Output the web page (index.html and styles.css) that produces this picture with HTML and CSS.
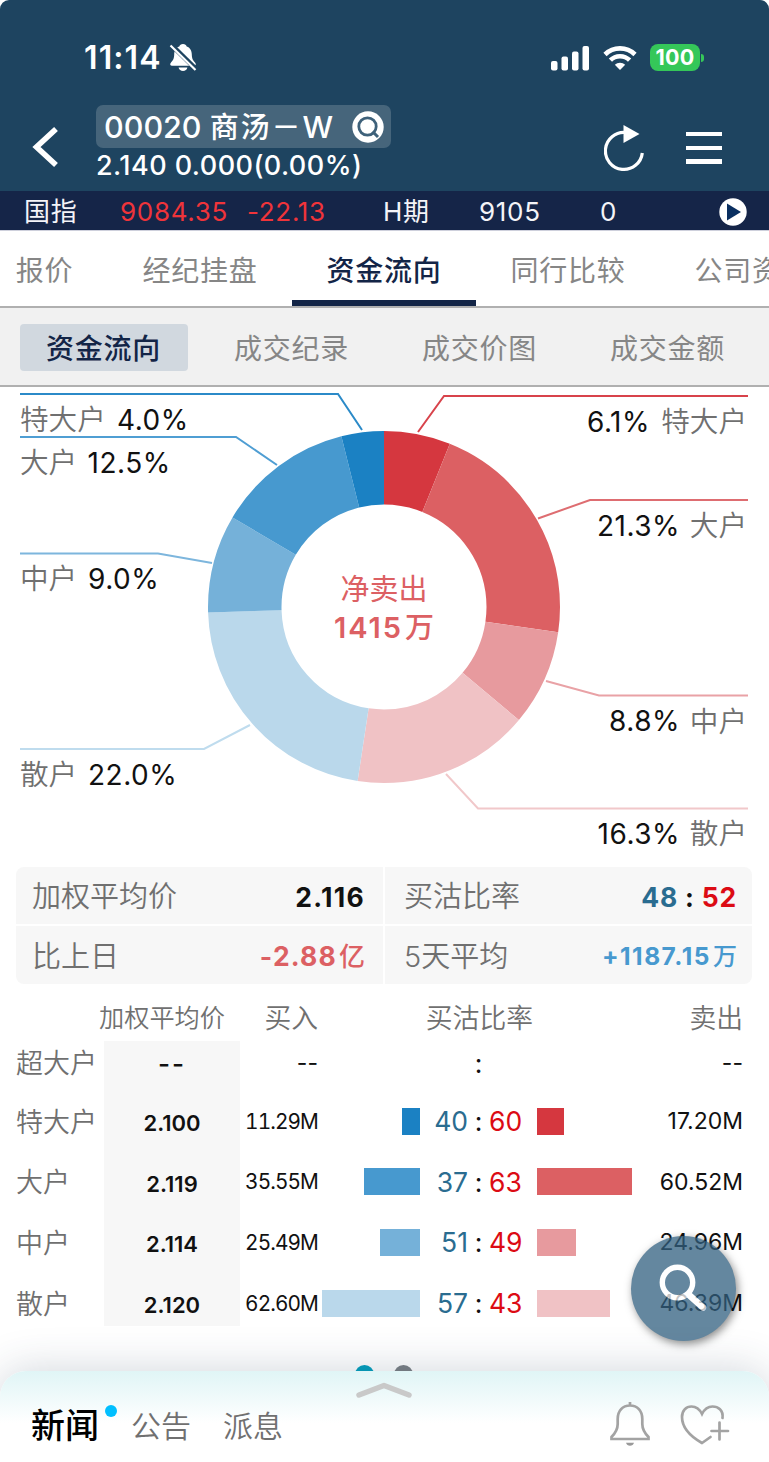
FILE: index.html
```html
<!DOCTYPE html>
<html lang="zh-CN">
<head>
  <meta charset="UTF-8" />
  <meta name="viewport" content="width=device-width, initial-scale=1.0" />
  <title>00020 商汤－W 资金流向</title>
  <link rel="stylesheet" href="styles.css">
</head>
<body>
  <div class="app">
    <header class="header">
      <div class="status-bar">
        <span class="time">11:14</span>
        <svg class="mute-icon" width="28" height="30" viewBox="0 0 28 30">
          <path d="M14 1c-2 0-3.300 1-3.700 2.600C6.500 5 5.300 8 5.200 11.500 5.100 16 3.800 17.500 2 19.500c-1.500 1.700-.8 3.200 1 3.200h22c1.800 0 2.500-1.500 1-3.200-1.800-2-3.100-3.500-3.200-8-.1-3.500-1.300-6.500-5.100-7.900C17.300 2 16 1 14 1z" fill="#fff"/>
          <path d="M9.600 24.600h8.800c-.4 2.200-2.200 3.500-4.400 3.500S10 26.800 9.600 24.600z" fill="#fff"/>
          <path d="M2.200 1.800L27.200 26.300" stroke="#1e4460" stroke-width="4.800"/>
          <path d="M1.500 2.500L26.500 27" stroke="#fff" stroke-width="2.200"/>
        </svg>
        <div class="status-right">
          <svg width="39" height="26" viewBox="0 0 39 26" fill="#fff">
            <rect x="0" y="16" width="6.500" height="9.500" rx="2"/>
            <rect x="10.500" y="11.500" width="6.500" height="14" rx="2"/>
            <rect x="21" y="6.500" width="6.500" height="19" rx="2"/>
            <rect x="31.500" y="1" width="6.500" height="24.500" rx="2"/>
          </svg>
          <svg class="wifi" width="34" height="26" viewBox="0 0 34 26" fill="none" stroke="#fff" stroke-width="4.600">
            <path d="M2 9.500a21.500 21.500 0 0 1 30 0"/>
            <path d="M7.400 15.200a13.500 13.500 0 0 1 19.200 0"/>
            <path d="M17 25l-5.200-5.200a7.400 7.400 0 0 1 10.400 0z" fill="#fff" stroke="none"/>
          </svg>
          <span class="battery">100</span><i class="battery-tip"></i>
        </div>
      </div>
      <div class="title-bar">
        <svg class="back" width="28" height="44" viewBox="0 0 28 44"><path d="M24 4L4.500 22l19.500 18" fill="none" stroke="#fff" stroke-width="5.600"/></svg>
        <div class="stock">
          <div class="stock-name">
            <span>00020 <b>商汤－</b>W</span>
            <svg width="32" height="32" viewBox="0 0 32 32">
              <circle cx="16" cy="16" r="15.700" fill="#fff"/>
              <circle cx="15.500" cy="15.500" r="8.700" fill="none" stroke="#3e617a" stroke-width="2.800"/>
              <path d="M20.500 20.500L26 26" stroke="#3e617a" stroke-width="3"/>
            </svg>
          </div>
          <div class="stock-price">2.140 0.000(0.00%)</div>
        </div>
        <svg class="refresh" width="42" height="48" viewBox="0 0 42 48">
          <path d="M21.500 8.500a18.500 18.500 0 1 0 16.800 20.500" fill="none" stroke="#fff" stroke-width="3.200"/>
          <path d="M19.500 1v18l16-9z" fill="#fff"/>
        </svg>
        <div class="menu"><i></i><i></i><i></i></div>
      </div>
    </header>

    <div class="ticker">
      <span>国指</span>
      <span class="down">9084.35</span>
      <span class="down">-22.13</span>
      <span>H期</span>
      <span>9105</span>
      <span>0</span>
      <svg width="28" height="28" viewBox="0 0 28 28"><circle cx="14" cy="14" r="13.700" fill="#fff"/><path d="M8 5.500v17L22 14z" fill="#0a2f60"/></svg>
    </div>

    <nav class="tabs">
      <a>报价</a>
      <a>经纪挂盘</a>
      <a class="active">资金流向</a>
      <a>同行比较</a>
      <a>公司资料</a>
    </nav>
    <nav class="sub-tabs">
      <a class="active">资金流向</a>
      <a>成交纪录</a>
      <a>成交价图</a>
      <a>成交金额</a>
    </nav>

    <svg class="chart" width="769" height="481" viewBox="0 386 769 481">
      <!-- segments run clockwise from 12 o'clock, values are percentages -->
      <g class="ring" transform="rotate(-90 384 607)">
        <circle cx="384" cy="607" r="139.250" pathLength="100" stroke="#d5373f" stroke-dasharray="6.1 93.9" />
        <circle cx="384" cy="607" r="139.250" pathLength="100" stroke="#dc6063" stroke-dasharray="21.2 78.8" stroke-dashoffset="-6.1" />
        <circle cx="384" cy="607" r="139.250" pathLength="100" stroke="#e79a9e" stroke-dasharray="8.8 91.2" stroke-dashoffset="-27.3" />
        <circle cx="384" cy="607" r="139.250" pathLength="100" stroke="#f0c2c5" stroke-dasharray="16.3 83.7" stroke-dashoffset="-36.1" />
        <circle cx="384" cy="607" r="139.250" pathLength="100" stroke="#bad8eb" stroke-dasharray="22.1 77.9" stroke-dashoffset="-52.4" />
        <circle cx="384" cy="607" r="139.250" pathLength="100" stroke="#75b1d9" stroke-dasharray="9 91" stroke-dashoffset="-74.500" />
        <circle cx="384" cy="607" r="139.250" pathLength="100" stroke="#4799cf" stroke-dasharray="12.6 87.4" stroke-dashoffset="-83.500" />
        <circle cx="384" cy="607" r="139.250" pathLength="100" stroke="#1b81c3" stroke-dasharray="3.9 96.1" stroke-dashoffset="-96.1" />
      </g>
      <g class="leaders">
        <path d="M20 394H338L362 430" stroke="#2b8ac8"/>
        <path d="M20 437H236L277 465" stroke="#4f9ed3"/>
        <path d="M20 553.500H158L212 563" stroke="#7db6dd"/>
        <path d="M20 749H204L250 725" stroke="#bfdcee"/>
        <path d="M748 396H444L418 432" stroke="#d8434b"/>
        <path d="M748 500H590L538 518.500" stroke="#de6d71"/>
        <path d="M748 695.500H599L546 681" stroke="#e9a2a6"/>
        <path d="M748 808.500H478L446 774" stroke="#f1c8ca"/>
      </g>
      <g class="labels">
        <text x="20" y="430" class="who">特大户</text><text x="117" y="429.500">4.0%</text>
        <text x="20" y="473" class="who">大户</text><text x="87.500" y="472.500">12.5%</text>
        <text x="20" y="589" class="who">中户</text><text x="88" y="588.500">9.0%</text>
        <text x="20" y="785" class="who">散户</text><text x="88" y="784.500">22.0%</text>
      </g>
      <g class="labels end">
        <text x="747" y="432" class="who">特大户</text><text x="650" y="431.500">6.1%</text>
        <text x="747" y="536" class="who">大户</text><text x="680" y="535.500">21.3%</text>
        <text x="747" y="731.500" class="who">中户</text><text x="680" y="731">8.8%</text>
        <text x="747" y="844" class="who">散户</text><text x="680" y="843.500">16.3%</text>
      </g>
      <text x="384" y="599.500" class="net-label">净卖出</text>
      <text x="384" y="637.500" class="net-value">1415<tspan class="unit" dx="2">万</tspan></text>
    </svg>

    <section class="stats">
      <div class="stat"><span>加权平均价</span><strong class="price">2.116</strong></div>
      <div class="stat"><span>买沽比率</span><strong><em class="buy">48</em> : <em class="sell">52</em></strong></div>
      <div class="stat"><span>比上日</span><strong class="loss">-2.88<small>亿</small></strong></div>
      <div class="stat"><span>5天平均</span><strong class="gain">+1187.15<small>万</small></strong></div>
    </section>

    <section class="flow">
      <div class="row head">
        <span class="avg-head">加权平均价</span><span class="buy-head">买入</span><span class="ratio-head">买沽比率</span><span class="sell-head">卖出</span>
      </div>
      <div class="row first">
        <span class="name">超大户</span><span class="avg dash">--</span><span class="vol-in dash">--</span>
        <span class="bar-in"></span><span class="ratio buy"></span><span class="colon">:</span><span class="ratio sell"></span><span class="bar-out"></span>
        <span class="vol-out dash">--</span>
      </div>
      <div class="row">
        <span class="name">特大户</span><span class="avg">2.100</span><span class="vol-in">11.29M</span>
        <span class="bar-in"><i class="in-1" style="width: 17.7px"></i></span><span class="ratio buy">40</span><span class="colon">:</span><span class="ratio sell">60</span><span class="bar-out"><i class="out-1" style="width: 27px"></i></span>
        <span class="vol-out">17.20M</span>
      </div>
      <div class="row">
        <span class="name">大户</span><span class="avg">2.119</span><span class="vol-in">35.55M</span>
        <span class="bar-in"><i class="in-2" style="width: 55.6px"></i></span><span class="ratio buy">37</span><span class="colon">:</span><span class="ratio sell">63</span><span class="bar-out"><i class="out-2" style="width: 95px"></i></span>
        <span class="vol-out">60.52M</span>
      </div>
      <div class="row">
        <span class="name">中户</span><span class="avg">2.114</span><span class="vol-in">25.49M</span>
        <span class="bar-in"><i class="in-3" style="width: 40px"></i></span><span class="ratio buy">51</span><span class="colon">:</span><span class="ratio sell">49</span><span class="bar-out"><i class="out-3" style="width: 39.4px"></i></span>
        <span class="vol-out">24.96M</span>
      </div>
      <div class="row last">
        <span class="name">散户</span><span class="avg">2.120</span><span class="vol-in">62.60M</span>
        <span class="bar-in"><i class="in-4" style="width: 98px"></i></span><span class="ratio buy">57</span><span class="colon">:</span><span class="ratio sell">43</span><span class="bar-out"><i class="out-4" style="width: 72.7px"></i></span>
        <span class="vol-out">46.39M</span>
      </div>
    </section>

    <div class="dots"><i class="on"></i><i></i></div>

    <div class="search-btn">
      <svg width="105" height="105" viewBox="0 0 105 105" fill="none" stroke="#fff">
        <circle cx="46.500" cy="46.500" r="15.200" stroke-width="5.400"/>
        <path d="M57.500 58.500L72 71.500" stroke-width="6.500" stroke-linecap="round"/>
      </svg>
    </div>

    <footer class="sheet">
      <svg class="handle" width="60" height="18" viewBox="0 0 60 18"><path d="M5 15l25-9.500L55 15" fill="none" stroke="#c9c9c9" stroke-width="5.500" stroke-linecap="round" stroke-linejoin="round"/></svg>
      <div class="sheet-tabs">
        <a class="active">新闻</a>
        <a>公告</a>
        <a>派息</a>
        <svg class="bell" width="42" height="46" viewBox="0 0 42 46">
          <path d="M2.500 38h37v-2c-4-4-6.200-7-6.200-13V18c0-8.500-5-13.500-12.300-13.500S8.700 9.500 8.700 18v5c0 6-2.200 9-6.200 13zM21 4.500V1" fill="none" stroke="#a3a3a3" stroke-width="2.700"/>
          <path d="M17 41.800h8c-.5 2-2 3-4 3s-3.500-1-4-3z" fill="#999"/>
        </svg>
        <svg class="heart" width="50" height="42" viewBox="0 0 50 42" fill="none" stroke="#a3a3a3" stroke-width="2.700" stroke-linecap="round">
          <path d="M42.500 14C43.500 6 38 2.500 32.500 2.500c-5 0-8.500 3.500-10.500 7.500C20 6 16.500 2.500 11.500 2.500 6 2.500 2 6.500 2 13c0 11 9.500 20 20 26l8.500-6"/>
          <path d="M31.500 27H48M39.500 18.500v17"/>
        </svg>
      </div>
    </footer>
  </div>
</body>
</html>
```

FILE: styles.css
```css
* {
  box-sizing: border-box;
}

body {
  margin: 0;
  background-color: #fff;
  font-family: Inter, "Noto Sans CJK SC", sans-serif;
  color: #111;
}

.app {
  position: relative;
  width: 769px;
  height: 1462px;
  overflow: hidden;
}

i, em {
  font-style: normal;
}

/* header */
.header {
  height: 191px;
  background-color: #1e4460;
  border-radius: 9px 9px 0 0;
  color: #fff;
}

.status-bar {
  display: flex;
  align-items: center;
  height: 105px;
  padding: 10px 65px 0 84px;
}

.time {
  font-size: 32px;
  font-weight: 600;
  line-height: 40px;
  letter-spacing: 1.1px;
}

.mute-icon {
  margin-left: 7px;
}

.status-right {
  display: flex;
  align-items: center;
  margin-left: auto;
}

.wifi {
  margin: 0 13px 0 13px;
}

.battery {
  width: 50px;
  height: 27px;
  border-radius: 8px;
  background-color: #35c759;
  font-size: 21.500px;
  font-weight: 700;
  line-height: 27px;
  letter-spacing: 0.2px;
  text-align: center;
}

.battery-tip {
  width: 3px;
  height: 8px;
  margin-left: 1px;
  border-radius: 0 3px 3px 0;
  background-color: #35c759;
}

.title-bar {
  display: flex;
  align-items: flex-start;
  padding: 0 47px 0 32px;
}

.back {
  margin-top: 20px;
}

.stock {
  flex: 1;
  margin-left: 36px;
}

.stock-name {
  display: flex;
  align-items: center;
  justify-content: space-between;
  width: 295px;
  height: 43px;
  padding: 0 7px 0 8px;
  border-radius: 7px;
  background-color: #46657b;
  font-size: 30.500px;
  font-weight: 500;
  line-height: 44px;
  white-space: nowrap;
}

.stock-name span {
  padding-top: 2px;
}

.stock-name b {
  font-size: 29px;
  font-weight: 500;
  letter-spacing: 1.900px;
}

.stock-price {
  margin-top: 1px;
  font-size: 27px;
  font-weight: 500;
  line-height: 33px;
  letter-spacing: 0.450px;
}

.refresh {
  margin-top: 19px;
}

.menu {
  display: flex;
  flex-direction: column;
  gap: 9.500px;
  width: 36px;
  margin: 27px 0 0 40px;
}

.menu i {
  height: 4.200px;
  background-color: #fff;
}

/* index ticker */
.ticker {
  display: grid;
  grid-template-columns: 96px 127px 136px 96px 121px 119px 28px;
  align-items: center;
  height: 40px;
  padding-left: 24px;
  border-bottom: 1px solid #ced0dc;
  background-color: #152548;
  color: #f4f4f8;
  font-size: 26px;
  line-height: 41px;
  letter-spacing: 0.700px;
}

.ticker .down {
  color: #f0343a;
}

/* tabs */
.tabs {
  display: flex;
  height: 77px;
  border-bottom: 2px solid #b0b0b0;
  font-size: 28px;
  letter-spacing: 0.8px;
  line-height: 80px;
  color: #868686;
  white-space: nowrap;
}

.tabs a {
  flex: 0 0 184px;
  text-align: center;
}

.tabs a:first-child {
  flex-basis: 108px;
  padding-right: 19px;
}

.tabs .active {
  height: 75px;
  border-bottom: 6px solid #132547;
  color: #132547;
  font-weight: 500;
}

.sub-tabs {
  display: grid;
  grid-template-columns: repeat(4, 168px);
  gap: 20px;
  height: 79px;
  padding: 16px 20px;
  border-bottom: 2px solid #b0b0b0;
  background-color: #f1f1f1;
  font-size: 28px;
  letter-spacing: 0.8px;
  line-height: 50px;
  text-align: center;
  text-indent: -1px;
  color: #868686;
}

.sub-tabs .active {
  height: 47px;
  border-radius: 4px;
  background-color: #d1d8df;
  color: #132547;
  font-weight: 500;
}

/* donut */
.chart {
  display: block;
  margin-top: -1px;
}

.ring circle {
  fill: none;
  stroke-width: 73.500px;
}

.leaders path {
  fill: none;
  stroke-width: 2px;
}

.labels {
  fill: #111;
  font-size: 28px;
  letter-spacing: 0.500px;
}

.labels.end {
  text-anchor: end;
}

.labels .who {
  fill: #707070;
  font-size: 28.600px;
  font-weight: 350;
  letter-spacing: 0;
}

.net-label,
.net-value {
  fill: #dc6063;
  font-size: 29px;
  text-anchor: middle;
}

.net-value {
  font-weight: 600;
  letter-spacing: 2px;
}

.net-value .unit {
  font-weight: 500;
  letter-spacing: 0;
}

/* summary */
.stats {
  display: grid;
  grid-template-columns: 367px 367px;
  gap: 2px;
  width: 736px;
  height: 117px;
  margin: 0 16px;
  border-radius: 8px;
  overflow: hidden;
}

.stat {
  display: flex;
  justify-content: space-between;
  align-items: center;
  padding: 3px 18px 0 16px;
  background-color: #f7f7f7;
  font-size: 29px;
  font-weight: 350;
  line-height: 40px;
  color: #707070;
}

.stat:nth-child(even) {
  padding-left: 19px;
  padding-right: 15px;
}

.stat strong {
  font-size: 26.500px;
  font-weight: 700;
  letter-spacing: 0.8px;
  color: #111;
}

.stat .price {
  letter-spacing: 1.300px;
}

.stat small {
  margin-left: 2px;
  font-size: 26px;
  font-weight: 500;
  letter-spacing: 0;
}

.stat .loss {
  color: #dc6063;
  letter-spacing: 1.200px;
}

.stat .gain {
  color: #4799cf;
  font-size: 24.500px;
  letter-spacing: 1.500px;
}

.gain small {
  font-size: 24px;
}

.stat .buy,
.ratio.buy {
  color: #2a6c90;
}

.sell {
  color: #dc0b14;
}

/* money flow table */
.row {
  display: grid;
  grid-template-columns: 88px 136px 78px 102px 48px 21px 48px 95px 111px;
  align-items: center;
  height: 60.600px;
  padding-left: 16px;
  line-height: 40px;
}

.row.head {
  grid-template-columns: 83px 136px 83px 321px 104px;
  height: 57px;
  padding-top: 10px;
  font-weight: 350;
  color: #707070;
}

/* outer rows are trimmed to the edges of the grey column */
.row.first {
  height: 50px;
}

.first > :not(.avg) {
  margin-bottom: 10px;
}

.row.last {
  height: 53px;
}

.last > :not(.avg) {
  margin-top: 8px;
}

.avg-head {
  grid-column: 2;
  font-size: 25.200px;
}

.buy-head,
.ratio-head,
.sell-head {
  font-size: 26.800px;
  text-align: right;
}

.ratio-head {
  padding-right: 106px;
}

.name {
  padding-top: 3px;
  font-size: 27px;
  font-weight: 350;
  white-space: nowrap;
  color: #707070;
}

.avg {
  align-self: stretch;
  padding-top: 12px;
  background-color: #f7f7f7;
  font-size: 22px;
  font-weight: 600;
  text-align: center;
}

.first .avg {
  padding-top: 3px;
}

.vol-in {
  padding-top: 1px;
  font-size: 20.800px;
  font-variant-numeric: tabular-nums;
  letter-spacing: -0.900px;
  text-align: right;
}

.vol-out {
  font-size: 23px;
  text-align: right;
}

.avg.dash {
  font-size: 26px;
  font-weight: 500;
  letter-spacing: 2px;
}

.vol-in.dash {
  font-size: 23px;
  font-variant-numeric: normal;
  letter-spacing: 0;
}

.bar-in,
.bar-out {
  display: flex;
  height: 27px;
}

.bar-in {
  justify-content: flex-end;
}

.ratio,
.colon {
  font-size: 26.500px;
}

.colon {
  text-align: center;
}

.ratio.buy {
  text-align: right;
}

.in-1 { background-color: #1b81c3; }
.in-2 { background-color: #4799cf; }
.in-3 { background-color: #75b1d9; }
.in-4 { background-color: #bad8eb; }
.out-1 { background-color: #d5373f; }
.out-2 { background-color: #dc6063; }
.out-3 { background-color: #e79a9e; }
.out-4 { background-color: #f0c2c5; }

/* page dots, half hidden by the sheet */
.dots {
  display: flex;
  justify-content: center;
  gap: 20px;
  padding: 39px 1px 0 0;
}

.dots i {
  width: 19px;
  height: 19px;
  border-radius: 50%;
  background-color: #7b8085;
}

.dots .on {
  background-color: #039fbd;
}

.search-btn {
  position: absolute;
  left: 631px;
  top: 1236px;
  width: 105px;
  height: 105px;
  border-radius: 50%;
  background-color: #315f7f;
  box-shadow: 2px 3px 8px rgba(0, 0, 0, 0.6);
  opacity: 0.75;
}

.sheet {
  position: absolute;
  left: 0;
  right: 0;
  bottom: 0;
  height: 91px;
  border-radius: 26px 26px 0 0;
  background: linear-gradient(#e0f5f6, #fff 52px);
  box-shadow: 0 0 44px rgba(40, 65, 90, 0.22);
}

.handle {
  display: block;
  margin: 9px 0 0 354px;
}

.sheet-tabs {
  display: flex;
  align-items: center;
  height: 56px;
  padding: 0 39px 0 31px;
  font-size: 30px;
  line-height: 60px;
  color: #707070;
}

.sheet-tabs a {
  margin-right: 32px;
  font-weight: 350;
}

.sheet-tabs .active {
  position: relative;
  color: #000;
  font-size: 34px;
  font-weight: 500;
}

.sheet-tabs .active::after {
  content: "";
  position: absolute;
  left: 74px;
  top: 9px;
  width: 12px;
  height: 12px;
  border-radius: 50%;
  background-color: #00bfff;
}

.bell {
  margin: 0 29px 4px auto;
}

.heart {
  margin-bottom: 3px;
}
```
